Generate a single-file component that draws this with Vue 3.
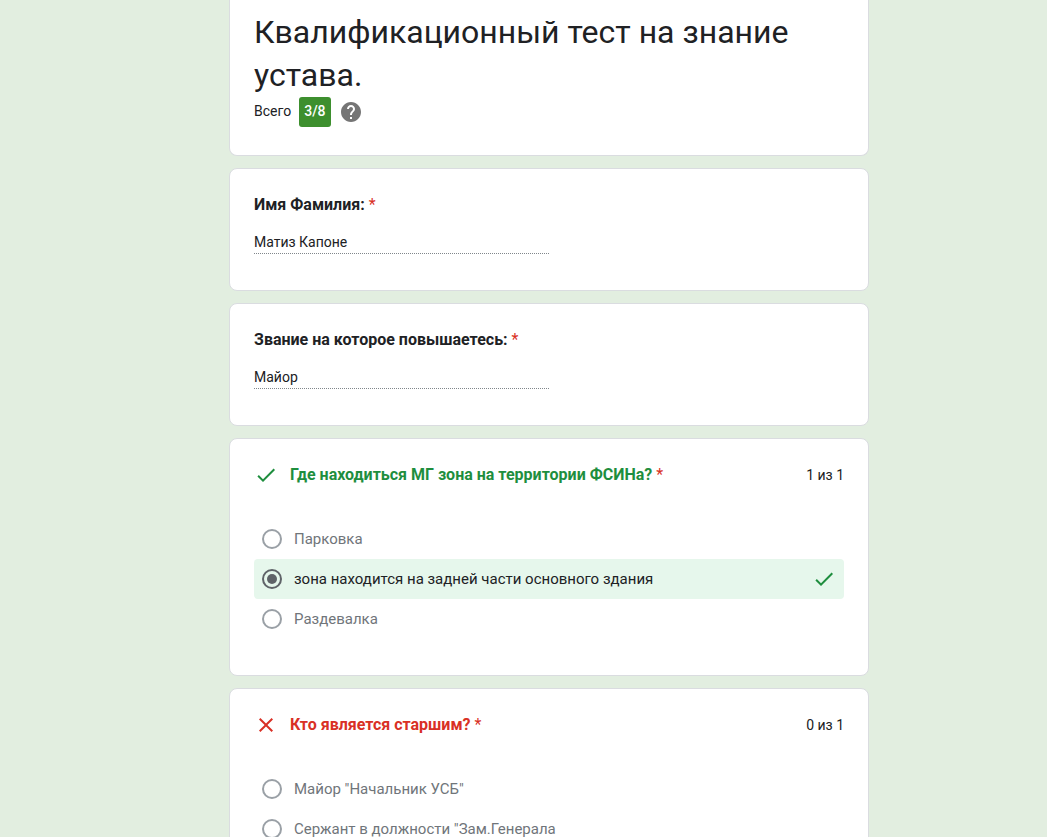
<script setup>
const fields = [
  { id: 'name', label: 'Имя Фамилия:', value: 'Матиз Капоне' },
  { id: 'rank', label: 'Звание на которое повышаетесь:', value: 'Майор' },
]

const questions = [
  {
    id: 'zone',
    title: 'Где находиться МГ зона на территории ФСИНа?',
    correct: true,
    score: '1 из 1',
    options: [
      { text: 'Парковка' },
      { text: 'зона находится на задней части основного здания', chosen: true },
      { text: 'Раздевалка' },
    ],
  },
  {
    id: 'senior',
    title: 'Кто является старшим?',
    correct: false,
    score: '0 из 1',
    options: [
      { text: 'Майор "Начальник УСБ"' },
      { text: 'Сержант в должности "Зам.Генерала' },
    ],
  },
]
</script>

<template>
  <main class="page">
    <form class="form" @submit.prevent>
      <header class="card intro">
        <h1 class="title">Квалификационный тест на знание устава.</h1>
        <div class="total">
          <span>Всего</span>
          <span class="badge">3/8</span>
          <button class="help" type="button" aria-label="Справка">
            <svg viewBox="0 0 24 24" width="24" height="24" aria-hidden="true">
              <path fill="#757575" d="M12 2C6.48 2 2 6.48 2 12s4.48 10 10 10 10-4.48 10-10S17.52 2 12 2zm1 17h-2v-2h2v2zm2.07-7.75l-.9.92C13.45 12.9 13 13.5 13 15h-2v-.5c0-1.1.45-2.1 1.17-2.83l1.24-1.26c.37-.36.59-.86.59-1.41 0-1.1-.9-2-2-2s-2 .9-2 2H8c0-2.21 1.79-4 4-4s4 1.79 4 4c0 .88-.36 1.68-.93 2.25z" />
            </svg>
          </button>
        </div>
      </header>

      <section v-for="f in fields" :key="f.id" class="card field">
        <label class="heading" :for="f.id">{{ f.label }} <span class="star">*</span></label>
        <input :id="f.id" class="answer" type="text" :value="f.value" readonly />
      </section>

      <section
        v-for="q in questions"
        :key="q.id"
        class="card"
        :class="q.correct ? 'right' : 'wrong'"
        role="radiogroup"
        :aria-labelledby="q.id"
      >
        <div class="question-head">
          <svg class="mark" viewBox="0 0 24 24" width="24" height="24" aria-hidden="true">
            <path v-if="q.correct" d="M9 16.17L4.83 12l-1.42 1.41L9 19 21 7l-1.41-1.41z" />
            <path v-else d="M19 6.41L17.59 5 12 10.59 6.41 5 5 6.41 10.59 12 5 17.59 6.41 19 12 13.41 17.59 19 19 17.59 13.41 12z" />
          </svg>
          <h2 :id="q.id" class="heading">{{ q.title }} <span class="star">*</span></h2>
          <span class="score">{{ q.score }}</span>
        </div>
        <div class="options">
          <label v-for="o in q.options" :key="o.text" class="option" :class="{ chosen: o.chosen }">
            <input class="radio" type="radio" :name="q.id" :checked="o.chosen" />
            <span class="option-text">{{ o.text }}</span>
            <svg v-if="o.chosen" class="mark" viewBox="0 0 24 24" width="24" height="24" aria-hidden="true">
              <path d="M9 16.17L4.83 12l-1.42 1.41L9 19 21 7l-1.41-1.41z" />
            </svg>
          </label>
        </div>
      </section>
    </form>
  </main>
</template>

<style scoped>
.page {
  box-sizing: border-box;
  height: 100vh;
  overflow: hidden;
  padding-left: 51px;
  background: #e2eee0;
  color: #202124;
  font-family: Roboto, "Noto Sans", sans-serif;
  font-size: 14px;
  line-height: 20px;
}
.form {
  display: flex;
  flex-direction: column;
  gap: 12px;
  max-width: 640px;
  margin: 0 auto;
}
.card {
  padding: 23px 24px 36px;
  border: 1px solid #dadce0;
  border-radius: 8px;
  background: #fff;
}
.intro {
  padding-top: 11px;
  padding-bottom: 28px;
  border-top: 0;
  border-top-left-radius: 0;
  border-top-right-radius: 0;
}
.title {
  margin: 0;
  font-size: 32px;
  font-weight: 400;
  line-height: 43px;
}
.total {
  display: flex;
  gap: 8px;
  height: 30px;
  line-height: 28px;
}
.badge {
  padding: 0 5px;
  border-radius: 3px;
  background: #3d8f2e;
  color: #fff;
  font-weight: 500;
}
.help {
  display: flex;
  align-items: center;
  padding: 0;
  border: 0;
  background: none;
}
.heading {
  margin: 0;
  font-size: 16px;
  font-weight: 700;
  line-height: 26px;
}
.star {
  color: #d93025;
  font-weight: 400;
}
.field {
  display: flex;
  flex-direction: column;
  align-items: flex-start;
  gap: 12px;
}
.answer {
  box-sizing: border-box;
  width: 50%;
  height: 24px;
  padding: 0;
  border: 0;
  border-bottom: 1px dotted #80868b;
  outline: 0;
  background: none;
  color: inherit;
  font: inherit;
}
.question-head {
  display: flex;
  align-items: center;
  gap: 12px;
}
.question-head .heading {
  flex: 1;
}
.score {
  line-height: 26px;
}
.mark {
  flex: none;
  fill: #1e8e3e;
}
.wrong .mark {
  fill: #d93025;
}
.right .heading {
  color: #1e8e3e;
}
.wrong .heading {
  color: #d93025;
}
.options {
  margin-top: 31px;
}
.option {
  display: flex;
  align-items: center;
  gap: 12px;
  min-height: 40px;
  padding: 0 8px;
  border-radius: 4px;
  color: #70757a;
  font-size: 15px;
  box-sizing: border-box;
}
.chosen {
  background: #e6f7ec;
  color: #202124;
}
.option-text {
  flex: 1;
}
.radio {
  flex: none;
  box-sizing: border-box;
  width: 20px;
  height: 20px;
  margin: 0;
  border: 2px solid #9aa0a6;
  border-radius: 50%;
  background: transparent;
  appearance: none;
}
.radio:checked {
  padding: 3px;
  border-color: #5f6368;
  background: #5f6368 content-box;
}
</style>

<style>
body {
  background: #e2eee0;
}
</style>
